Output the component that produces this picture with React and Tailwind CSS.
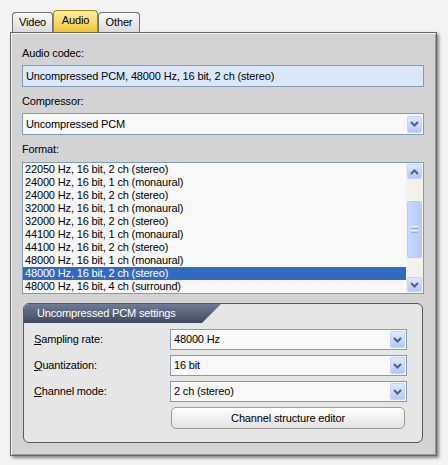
import React from "react";

const Chevron = ({ up }) => (
  <svg width="9" height="6" viewBox="0 0 9 6">
    <path
      d={up ? "M1 5 L4.5 1.5 L8 5" : "M1 1 L4.5 4.5 L8 1"}
      fill="none"
      stroke="#4d6185"
      strokeWidth="2"
    />
  </svg>
);

const XPBtn = ({ className, up }) => (
  <div
    className={
      "flex items-center justify-center rounded-[2px] border border-[#c3d3fb] bg-gradient-to-b from-[#dfe8fe] to-[#b4c8f6] " +
      className
    }
  >
    <Chevron up={up} />
  </div>
);

const Select = ({ value, className }) => (
  <div
    className={
      "flex items-center border border-[#7f9db9] bg-[#f8f8f8] pl-[3px] pr-[1px] " +
      className
    }
  >
    <span className="flex-1 whitespace-nowrap">{value}</span>
    <XPBtn className="h-[17px] w-[15px]" />
  </div>
);

const rows = [
  "22050 Hz, 16 bit, 2 ch (stereo)",
  "24000 Hz, 16 bit, 1 ch (monaural)",
  "24000 Hz, 16 bit, 2 ch (stereo)",
  "32000 Hz, 16 bit, 1 ch (monaural)",
  "32000 Hz, 16 bit, 2 ch (stereo)",
  "44100 Hz, 16 bit, 1 ch (monaural)",
  "44100 Hz, 16 bit, 2 ch (stereo)",
  "48000 Hz, 16 bit, 1 ch (monaural)",
  "48000 Hz, 16 bit, 2 ch (stereo)",
  "48000 Hz, 16 bit, 4 ch (surround)",
];

export default function App() {
  return (
    <div className="h-[465px] w-[448px] bg-[#f3f3f3] pl-[10px] pt-[10px] font-['Liberation_Sans',Arial,sans-serif] text-[11px] leading-[13px] tracking-[-0.15px] text-black">
      {/* tabs */}
      <div className="flex h-[22px] items-end pl-[2px]">
        <div className="flex h-[20px] w-[41px] items-center justify-center rounded-t-[4px] border border-b-0 border-[#707070] bg-gradient-to-b from-[#fbfbfb] to-[#dadada]">
          Video
        </div>
        <div className="flex h-[22px] w-[45px] items-center justify-center rounded-t-[4px] border border-b-0 border-[#a8861c] bg-gradient-to-b from-[#ffef9c] to-[#f4c61c] pb-[2px]">
          Audio
        </div>
        <div className="flex h-[20px] w-[42px] items-center justify-center rounded-t-[4px] border border-b-0 border-[#707070] bg-gradient-to-b from-[#fbfbfb] to-[#dadada]">
          Other
        </div>
      </div>
      {/* panel */}
      <div className="flex h-[424px] w-[427px] flex-col border border-[#666666] bg-[#d3d3d3] pl-[11px] pr-[12px] pt-[14px] shadow-[inset_1px_1px_0_#f4f4f4,inset_-1px_-1px_0_#9a9a9a,2px_2px_3px_rgba(0,0,0,0.45)]">
        <div className="h-[13px]">Audio codec:</div>
        <div className="mt-[5px] flex h-[22px] items-center border border-[#7f9db9] bg-[#dbe7f7] pl-[3px]">
          Uncompressed PCM, 48000 Hz, 16 bit, 2 ch (stereo)
        </div>
        <div className="mt-[8px] h-[13px]">Compressor:</div>
        <Select value="Uncompressed PCM" className="mt-[5px] h-[22px]" />
        <div className="mt-[8px] h-[13px]">Format:</div>
        {/* list */}
        <div className="mt-[6px] flex h-[132px] border border-[#7f9db9] bg-[#f8f8f8]">
          <div className="flex-1 overflow-hidden">
            {rows.map((r, i) => (
              <div
                key={i}
                className={
                  i === 8
                    ? "h-[13px] whitespace-nowrap bg-[#316ac5] pl-[2px] text-white"
                    : "h-[13px] whitespace-nowrap pl-[2px]"
                }
              >
                {r}
              </div>
            ))}
          </div>
          <div className="flex w-[17px] flex-col bg-[#f2f1ec] py-[1px] pl-[1px] pr-[1px]">
            <XPBtn className="h-[15px] w-[15px]" up />
            <div className="flex flex-1 flex-col">
              <div className="mt-[22px] flex h-[57px] w-[15px] flex-col items-center justify-center gap-[1px] rounded-[2px] border border-[#b7c9f6] bg-gradient-to-r from-[#c9d8fc] to-[#b7cbf9]">
                <div className="h-[1px] w-[7px] bg-[#eef3fe]" />
                <div className="h-[1px] w-[7px] bg-[#8dadf0]" />
                <div className="h-[1px] w-[7px] bg-[#eef3fe]" />
                <div className="h-[1px] w-[7px] bg-[#8dadf0]" />
              </div>
            </div>
            <XPBtn className="h-[15px] w-[15px]" />
          </div>
        </div>
        {/* group box */}
        <div className="mx-[1px] mt-[9px] flex h-[140px] flex-col overflow-hidden rounded-[6px] border border-[#5a5a5a] bg-[#e6e6e6]">
          <div className="flex h-[19px] w-[197px] items-center bg-gradient-to-b from-[#6f7c94] to-[#3f4a60] pl-[13px] text-white [clip-path:polygon(0_0,100%_0,calc(100%-19px)_100%,0_100%)]">
            Uncompressed PCM settings
          </div>
          <div className="flex flex-col gap-[5px] pl-[10px] pr-[15px] pt-[6px]">
            <div className="flex items-center">
              <div className="w-[136px]">
                <span className="underline">S</span>ampling rate:
              </div>
              <Select value="48000 Hz" className="h-[21px] flex-1" />
            </div>
            <div className="flex items-center">
              <div className="w-[136px]">
                <span className="underline">Q</span>uantization:
              </div>
              <Select value="16 bit" className="h-[21px] flex-1" />
            </div>
            <div className="flex items-center">
              <div className="w-[136px]">
                <span className="underline">C</span>hannel mode:
              </div>
              <Select value="2 ch (stereo)" className="h-[21px] flex-1" />
            </div>
            <div className="flex">
              <div className="w-[137px]" />
              <div className="mr-[2px] flex h-[22px] flex-1 items-center justify-center rounded-[5px] border border-[#9a9a9a] bg-gradient-to-b from-[#ffffff] to-[#e2e2e2]">
                Channel structure editor
              </div>
            </div>
          </div>
        </div>
      </div>
    </div>
  );
}
